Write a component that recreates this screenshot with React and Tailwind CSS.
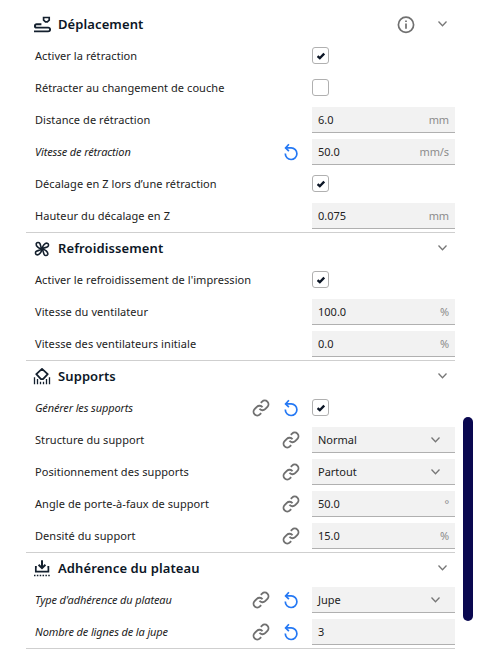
import React from "react";

const SECTIONS = [
  {
    title: "Déplacement",
    icon: TravelIcon,
    info: true,
    settings: [
      { label: "Activer la rétraction", type: "check", value: true },
      { label: "Rétracter au changement de couche", type: "check", value: false },
      { label: "Distance de rétraction", value: "6.0", unit: "mm" },
      { label: "Vitesse de rétraction", value: "50.0", unit: "mm/s", changed: true },
      { label: "Décalage en Z lors d’une rétraction", type: "check", value: true },
      { label: "Hauteur du décalage en Z", value: "0.075", unit: "mm" },
    ],
  },
  {
    title: "Refroidissement",
    icon: FanIcon,
    settings: [
      { label: "Activer le refroidissement de l'impression", type: "check", value: true },
      { label: "Vitesse du ventilateur", value: "100.0", unit: "%" },
      { label: "Vitesse des ventilateurs initiale", value: "0.0", unit: "%" },
    ],
  },
  {
    title: "Supports",
    icon: SupportIcon,
    settings: [
      { label: "Générer les supports", type: "check", value: true, linked: true, changed: true },
      { label: "Structure du support", type: "select", value: "Normal", linked: true },
      { label: "Positionnement des supports", type: "select", value: "Partout", linked: true },
      { label: "Angle de porte-à-faux de support", value: "50.0", unit: "°", linked: true },
      { label: "Densité du support", value: "15.0", unit: "%", linked: true },
    ],
  },
  {
    title: "Adhérence du plateau",
    icon: AdhesionIcon,
    settings: [
      { label: "Type d'adhérence du plateau", type: "select", value: "Jupe", linked: true, changed: true },
      { label: "Nombre de lignes de la jupe", value: "3", linked: true, changed: true },
    ],
  },
];

function Icon({ children, className = "text-[#14202e]" }) {
  return (
    <svg
      viewBox="0 0 18 18"
      className={`size-[18px] shrink-0 ${className}`}
      fill="none"
      stroke="currentColor"
      strokeWidth="1.7"
    >
      {children}
    </svg>
  );
}

function TravelIcon() {
  return (
    <Icon>
      <path d="M10.6 1.500h5.600v2.600L14.300 5.800h-1.800L10.600 4.100z" />
      <path d="M8.400 8.200H3.600a1.700 1.700 0 0 0 0 3.400h11.600a1.900 1.900 0 0 1 0 3.800H1" strokeWidth="1.900" />
    </Icon>
  );
}

const FAN_BLADE = "M9 9C7.600 7.400 7.800 5.200 6.800 3.400 6 2 3.600 2.200 3.200 3.800 2.800 6 5.800 8.600 9 9z";

function FanIcon() {
  return (
    <Icon>
      <g strokeWidth="1.600">
        <path d={FAN_BLADE} />
        <path d={FAN_BLADE} transform="rotate(90 9 9)" />
        <path d={FAN_BLADE} transform="rotate(180 9 9)" />
        <path d={FAN_BLADE} transform="rotate(270 9 9)" />
      </g>
      <circle cx="9" cy="9" r="1.800" fill="currentColor" stroke="none" />
    </Icon>
  );
}

function SupportIcon() {
  return (
    <Icon>
      <path d="M9 .900L14.700 6.200 10 11.100H8L3.300 6.200z" strokeLinejoin="round" strokeWidth="1.800" />
      <path
        d="M1.500 9.300v7M4.500 11v5.300M7.500 13.800v2.500M10.500 13.800v2.500M13.500 11v5.300M16.500 9.300v7"
        strokeWidth="1.300"
      />
    </Icon>
  );
}

function AdhesionIcon() {
  return (
    <Icon>
      <path d="M9 .3v7.700M5.600 4.800L9 8.200 12.400 4.800" strokeWidth="2" />
      <path d="M3.800 6.800H2.800v4.900h12.600V6.800h-1" />
      <path d="M1 15.500h16" strokeDasharray="1.500 1.350" strokeWidth="1.500" />
    </Icon>
  );
}

function LinkIcon() {
  return (
    <Icon className="text-[#707070]">
      <g transform="scale(.75)" strokeWidth="2.500">
        <path d="M10 13a5 5 0 0 0 7.540.540l3-3a5 5 0 0 0-7.070-7.070l-1.720 1.710" />
        <path d="M14 11a5 5 0 0 0-7.540-.540l-3 3a5 5 0 0 0 7.070 7.070l1.710-1.710" />
      </g>
    </Icon>
  );
}

function ResetIcon() {
  return (
    <Icon className="text-[#2478f4]">
      <path d="M3.800 4.900h5.400a5.800 5.800 0 1 1-5.900 5.700" />
      <path d="M6.900 1.300L3.600 4.900l3.300 3.200" />
    </Icon>
  );
}

function InfoIcon() {
  return (
    <Icon className="text-[#707070]">
      <circle cx="9" cy="8.700" r="7.600" />
      <path d="M9 7.600V12.800M9 4.500v1.600" />
    </Icon>
  );
}

function Chevron() {
  return (
    <svg viewBox="0 0 10 6" className="h-1.5 w-2.5 shrink-0 text-[#777]" fill="none" stroke="currentColor" strokeWidth="1.3">
      <path d="M.500.500l4 4.300 4-4.300" />
    </svg>
  );
}

function Checkbox({ checked }) {
  return (
    <div className="mb-px flex size-[17px] items-center justify-center rounded-[3px] border border-[#b0b0b0] bg-white">
      {checked && (
        <svg viewBox="0 0 8 8" className="size-2 text-[#0c1626]" fill="none" stroke="currentColor" strokeWidth="2.4">
          <path d="M.5 4.200L2.800 6.200 7.200 1.500" />
        </svg>
      )}
    </div>
  );
}

function Control({ type, value, unit }) {
  if (type === "check") return <Checkbox checked={value} />;
  return (
    <div className="flex h-[26px] items-center justify-between border-b border-[#b0b0b0] bg-[#f2f2f2] px-1.5 pt-px">
      <span>{value}</span>
      {type === "select" ? (
        <div className="pr-2">
          <Chevron />
        </div>
      ) : (
        <span className="tracking-[-0.1px] text-[#8c8c8c]">{unit}</span>
      )}
    </div>
  );
}

function SettingRow({ label, linked, changed, ...control }) {
  return (
    <div className="flex h-8 items-center gap-3 pl-[9px]">
      <span className={`flex-1 whitespace-nowrap ${changed ? "tracking-[-0.13px] italic" : "tracking-[0.07px]"}`}>
        {label}
      </span>
      {linked && <LinkIcon />}
      {changed && <ResetIcon />}
      <div className="w-[143px]">
        <Control {...control} />
      </div>
    </div>
  );
}

function Section({ title, icon: SectionIcon, info, settings }) {
  return (
    <section className="group">
      <header className="flex h-8 items-center border-t border-[#cfcfcf] px-[7px] group-first:border-transparent">
        <SectionIcon />
        <h2 className="ml-[7px] flex-1 text-[13px] font-semibold tracking-[0.1px] text-[#0c1626]">{title}</h2>
        {info && (
          <div className="mr-[23px]">
            <InfoIcon />
          </div>
        )}
        <div className="pb-0.5">
          <Chevron />
        </div>
      </header>
      {settings.map((s) => (
        <SettingRow key={s.label} {...s} />
      ))}
    </section>
  );
}

export default function App() {
  return (
    <div className="flex h-[652px] w-[493px] overflow-hidden bg-white font-['Noto_Sans',sans-serif] text-[11px] text-[#222]">
      <main className="ml-[26px] h-[649px] w-[429px] border-b border-[#cfcfcf] pt-2">
        {SECTIONS.map((s) => (
          <Section key={s.title} {...s} />
        ))}
      </main>
      <div className="mt-[417px] ml-2 h-[204px] w-2.5 rounded-full bg-[#0a0850]" />
    </div>
  );
}
